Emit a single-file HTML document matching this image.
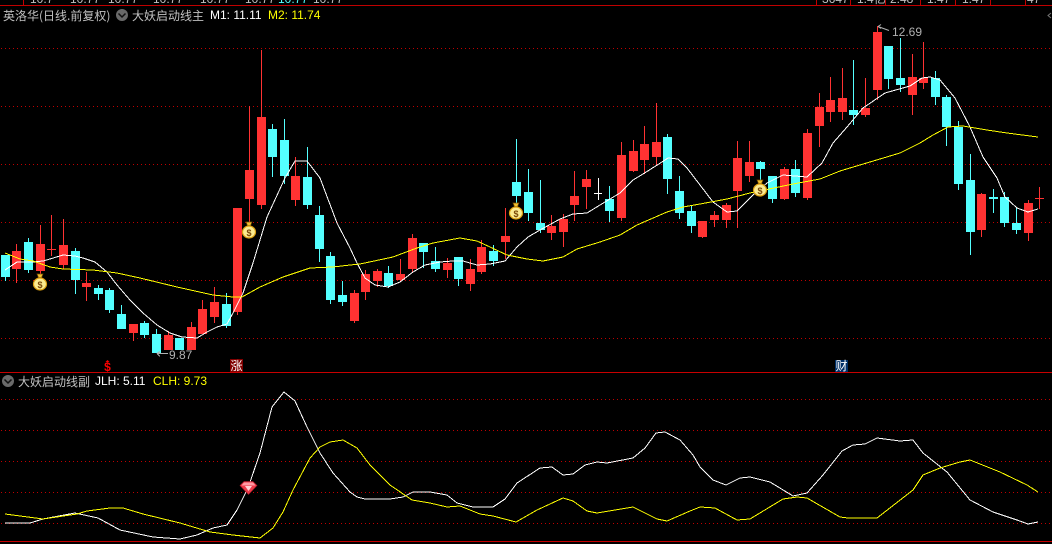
<!DOCTYPE html>
<html lang="zh">
<head>
<meta charset="utf-8">
<title>英洛华 K线</title>
<style>
html,body{margin:0;padding:0;background:#000;width:1052px;height:544px;overflow:hidden}
svg{display:block;position:absolute;left:0;top:0}
text{font-family:"Liberation Sans","WenQuanYi Zen Hei","Noto Sans CJK SC",sans-serif}
.cn{font-family:"WenQuanYi Zen Hei","Noto Sans CJK SC","Liberation Sans",sans-serif;font-size:12px}
.n{font-size:12px}
.g{fill:none;stroke:#c00000;stroke-width:1;stroke-dasharray:1 3;shape-rendering:crispEdges}
.l{fill:none;stroke-width:1;shape-rendering:crispEdges}
.t{fill:#c0c0c0;font-size:12px}
.d{font-size:9px;font-weight:bold;fill:#7a4808;text-anchor:middle}
</style>
</head>
<body>
<svg width="1052" height="544" viewBox="0 0 1052 544" xmlns="http://www.w3.org/2000/svg">
<defs>
<g id="bag"><path d="M-3-9h6l-1.500 3.500h-3z" fill="#f0c030" stroke="#7a5000" stroke-width=".7"/><ellipse cx="0" cy="1" rx="6.500" ry="6" fill="#fbeb90" stroke="#dca010" stroke-width="1.200"/></g>
</defs>
<rect width="1052" height="544" fill="#000"/>

<g class="t">
<text x="30" y="3">10.7</text><text x="70" y="3">10.77</text><text x="108" y="3">10.77</text><text x="153" y="3">10.77</text><text x="200" y="3">10.77</text><text x="245" y="3">10.77</text><text x="278" y="3" style="fill:#54ffff">10.77</text><text x="313" y="3">10.77</text>
<text x="822" y="3">3647</text><text x="857" y="3">1.4亿</text><text x="890" y="3">2.48</text><text x="927" y="3">1.47</text><text x="962" y="3">1.47</text><text x="1027" y="3">47</text>
</g>
<path d="M0 5.5H1052M23.5 0V5M816.5 0V5M850.5 0V5M885.5 0V5M920.5 0V5M955.5 0V5M990.5 0V5M1025.5 0V5" stroke="#c00000" stroke-width="1" fill="none" shape-rendering="crispEdges"/>

<path class="g" d="M1 48.5H1052M1 106.5H1052M1 164.5H1052M1 222.5H1052M1 280.5H1052M1 338.5H1052"/>
<path class="g" d="M1 399.5H1052M1 430.5H1052M1 461.5H1052M1 492.5H1052M1 523.5H1052"/>
<path d="M0 372.5H1052M0 541.5H1052" stroke="#c80000" stroke-width="1" shape-rendering="crispEdges"/>

<path fill="#ff3232" shape-rendering="crispEdges" d="
M12 251h9v18h-9zM16 244h1v39h-1z
M36 244h9v27h-9zM40 225h1v49h-1z
M47 249h9v1h-9zM51 215h1v41h-1z
M59 245h9v20h-9zM63 219h1v50h-1z
M82 283h9v4h-9zM86 272h1v29h-1z
M129 324h9v9h-9zM133 324h1v17h-1z
M164 335h9v15h-9zM168 331h1v19h-1z
M187 327h9v23h-9zM191 322h1v28h-1z
M198 309h9v25h-9zM202 300h1v34h-1z
M210 302h9v15h-9zM214 287h1v36h-1z
M233 208h9v104h-9zM237 208h1v107h-1z
M245 170h9v29h-9zM249 106h1v117h-1z
M257 117h9v88h-9zM261 50h1v159h-1z
M291 176h9v24h-9zM295 157h1v49h-1z
M350 293h9v28h-9zM354 290h1v33h-1z
M361 274h9v18h-9zM365 270h1v30h-1z
M373 271h9v10h-9zM377 269h1v18h-1z
M396 274h9v6h-9zM400 259h1v23h-1z
M408 238h9v31h-9zM412 234h1v39h-1z
M443 263h9v7h-9zM447 258h1v20h-1z
M466 269h9v15h-9zM470 259h1v32h-1z
M477 247h9v25h-9zM481 240h1v34h-1z
M501 236h9v6h-9zM505 208h1v51h-1z
M547 226h9v7h-9zM551 215h1v25h-1z
M559 219h9v13h-9zM563 214h1v33h-1z
M570 196h9v9h-9zM574 171h1v50h-1z
M582 179h9v8h-9zM586 170h1v39h-1z
M617 155h9v63h-9zM621 142h1v79h-1z
M629 151h9v20h-9zM633 140h1v32h-1z
M640 144h9v16h-9zM644 126h1v48h-1z
M652 142h9v15h-9zM656 103h1v63h-1z
M698 221h9v16h-9zM702 221h1v17h-1z
M710 215h9v5h-9zM714 211h1v16h-1z
M722 205h9v15h-9zM726 203h1v25h-1z
M733 158h9v33h-9zM737 141h1v87h-1z
M745 162h9v14h-9zM749 141h1v41h-1z
M780 169h9v30h-9zM784 167h1v33h-1z
M803 133h9v65h-9zM807 129h1v71h-1z
M815 107h9v19h-9zM819 93h1v54h-1z
M826 100h9v12h-9zM830 77h1v45h-1z
M838 98h9v14h-9zM842 68h1v52h-1z
M861 108h9v7h-9zM865 78h1v39h-1z
M873 32h9v58h-9zM877 26h1v74h-1z
M908 77h9v18h-9zM912 54h1v61h-1z
M919 78h9v5h-9zM923 42h1v47h-1z
M977 194h9v36h-9zM981 193h1v44h-1z
M1024 203h9v30h-9zM1028 200h1v41h-1z
M1035 198h9v1h-9zM1039 187h1v22h-1z"/>

<path fill="#54ffff" shape-rendering="crispEdges" d="
M1 255h9v22h-9zM5 255h1v26h-1z
M24 242h9v28h-9zM28 238h1v35h-1z
M71 251h9v29h-9zM75 248h1v46h-1z
M94 288h9v6h-9zM98 285h1v15h-1z
M105 290h9v20h-9zM109 288h1v25h-1z
M117 314h9v15h-9zM121 305h1v24h-1z
M140 323h9v12h-9zM144 321h1v17h-1z
M152 334h9v19h-9zM156 329h1v24h-1z
M175 338h9v12h-9z
M222 304h9v22h-9zM226 293h1v35h-1z
M268 129h9v28h-9zM272 124h1v53h-1z
M280 140h9v36h-9zM284 119h1v65h-1z
M303 177h9v28h-9zM307 147h1v62h-1z
M315 215h9v34h-9zM319 206h1v56h-1z
M326 256h9v44h-9zM330 252h1v52h-1z
M338 295h9v7h-9zM342 281h1v25h-1z
M384 273h9v13h-9zM388 266h1v22h-1z
M419 243h9v9h-9zM423 243h1v25h-1z
M431 261h9v8h-9zM435 247h1v25h-1z
M454 257h9v22h-9zM458 257h1v29h-1z
M489 251h9v10h-9zM493 245h1v21h-1z
M512 182h9v14h-9zM516 139h1v66h-1z
M524 192h9v21h-9zM528 169h1v52h-1z
M536 223h9v7h-9zM540 180h1v53h-1z
M605 199h9v12h-9zM609 186h1v36h-1z
M663 137h9v42h-9zM667 134h1v60h-1z
M675 191h9v22h-9zM679 176h1v43h-1z
M687 211h9v15h-9zM691 206h1v27h-1z
M756 162h9v7h-9zM760 161h1v34h-1z
M768 176h9v23h-9zM772 176h1v27h-1z
M791 169h9v24h-9zM795 160h1v37h-1z
M849 110h9v5h-9zM853 60h1v65h-1z
M884 46h9v33h-9zM888 46h1v43h-1z
M896 78h9v7h-9zM900 38h1v54h-1z
M931 78h9v19h-9zM935 71h1v34h-1z
M942 97h9v30h-9zM946 95h1v51h-1z
M954 127h9v57h-9zM958 121h1v69h-1z
M966 180h9v52h-9zM970 154h1v101h-1z
M989 197h9v2h-9zM993 189h1v24h-1z
M1000 197h9v26h-9zM1004 192h1v35h-1z
M1012 223h9v7h-9zM1016 207h1v27h-1z"/>
<path fill="#fff" shape-rendering="crispEdges" d="M594 193h8v1h-8zM598 178h1v22h-1z"/>

<polyline class="l" stroke="#fff" points="5,270 17,262 33,262 43,261 50,259 63,255 75,256 83,258 95,262 107,272 117,285 130,300 143,313 157,325 170,333 182,337 197,338 207,332 217,327 227,324 233,313 243,293 253,263 267,217 285,178 295,161 307,161 320,178 337,223 350,248 357,263 365,278 375,285 388,287 400,282 413,272 425,265 440,262 453,261 463,261 477,265 490,264 505,261 517,247 528,237 540,230 560,219 573,214 587,213 600,205 620,193 633,180 643,174 662,162 668,158 678,159 687,168 700,185 713,202 727,212 737,211 753,195 767,183 783,175 807,177 822,163 833,143 847,127 863,108 885,93 910,86 922,78 930,77 940,80 955,98 970,127 983,157 997,178 1005,197 1017,208 1028,212 1038,209"/>
<polyline class="l" stroke="#ffff00" points="5,253 20,259 33,261 50,267 63,269 93,270 117,273 140,278 177,287 213,295 233,297 242,297 260,287 283,277 310,268 333,267 350,265 360,264 393,257 417,248 433,243 460,238 477,241 490,247 507,255 527,259 543,261 563,257 577,249 600,242 620,235 637,225 667,212 683,207 700,204 727,199 750,193 793,184 820,179 840,171 860,165 900,153 920,143 933,135 948,127 963,126 987,130 1007,133 1038,137"/>

<use href="#bag" x="40" y="283"/><text class="d" x="40" y="288">$</text>
<use href="#bag" x="249" y="231"/><text class="d" x="249" y="236">$</text>
<use href="#bag" x="516" y="212"/><text class="d" x="516" y="217">$</text>
<use href="#bag" x="760" y="189"/><text class="d" x="760" y="194">$</text>

<path d="M168 353.500H157M157 353.500l3-2M157 353.500l3 3" stroke="#b0b0b0" fill="none" shape-rendering="crispEdges"/>
<text x="169" y="359" font-size="12" fill="#b0b0b0">9.87</text>
<path d="M889 30.500L878 26.500M878 26.500l3-2M878 26.500l3 2" stroke="#b0b0b0" fill="none"/>
<text x="892" y="36" font-size="12" fill="#b0b0b0">12.69</text>

<text class="cn" x="3" y="20" fill="#c0c0c0">英洛华(日线.前复权)</text>
<circle cx="122" cy="15" r="6" fill="#6a6a6a"/><path d="M118.500 13.500l3.500 3.500 3.500-3.500" fill="none" stroke="#111" stroke-width="1.500"/>
<text class="cn" x="132" y="20" fill="#c0c0c0">大妖启动线主</text>
<text class="n" x="210" y="19" fill="#fff">M1: 11.11</text>
<text class="n" x="268" y="19" fill="#ffff00">M2: 11.74</text>
<path d="M1051 13l-3 2.500 3 2.500" fill="none" stroke="#777"/>

<circle cx="8" cy="381" r="6" fill="#6a6a6a"/><path d="M4.500 379.500l3.500 3.500 3.500-3.500" fill="none" stroke="#111" stroke-width="1.500"/>
<text class="cn" x="18" y="386" fill="#c0c0c0">大妖启动线副</text>
<text class="n" x="95" y="385" fill="#fff">JLH: 5.11</text>
<text class="n" x="153" y="385" fill="#ffff00">CLH: 9.73</text>

<text x="107.500" y="371" text-anchor="middle" font-size="12" font-weight="bold" fill="#ff0000">$</text>
<path d="M107.500 360l2 2h-4z" fill="#ff0000"/>
<rect x="230" y="359" width="13" height="13" fill="#800000"/>
<text class="cn" x="230.500" y="370" fill="#fff">涨</text>
<rect x="835" y="360" width="13" height="12" fill="#003068"/>
<text class="cn" x="835.500" y="370" fill="#fff">财</text>

<polyline class="l" stroke="#fff" points="5,523 30,523 43,519 75,513 98,518 120,530 153,537 180,539 197,535 213,528 227,525 237,510 248,488 260,453 272,407 284,392 295,401 307,427 320,453 333,473 350,492 357,497 365,499 390,499 403,497 413,492 430,492 447,495 457,503 473,507 493,507 505,499 517,483 540,468 552,467 563,475 573,474 585,465 597,462 607,463 633,458 645,448 656,433 665,432 680,440 693,455 700,467 713,480 726,485 740,478 750,477 770,482 793,496 807,493 823,475 842,451 853,445 865,444 877,438 900,441 913,440 923,453 947,472 970,500 993,512 1017,520 1028,524 1038,522"/>
<polyline class="l" stroke="#ffff00" points="5,514 43,519 77,514 87,511 110,508 123,508 143,514 180,523 210,532 233,535 260,538 273,528 283,512 293,490 310,458 320,447 330,442 343,440 350,444 357,448 370,465 390,485 412,500 430,503 447,507 460,506 480,514 493,516 516,522 537,510 563,498 573,501 587,511 597,513 633,507 657,519 667,521 690,511 700,507 715,508 737,520 750,519 783,499 797,497 807,498 840,517 848,518 877,518 913,490 923,475 940,468 960,462 970,460 1000,472 1027,485 1038,492"/>

<path d="M244 481.500h9l4 4-8.500 9-8.500-9z" fill="#ee3a4a" stroke="#b01828" stroke-width=".6"/>
<path d="M244 482.500h9l2.500 3h-14z" fill="#ff9aa4"/>
<path d="M245 486h7l-3.500 5z" fill="#ffd0d4"/>
</svg>
</body>
</html>
